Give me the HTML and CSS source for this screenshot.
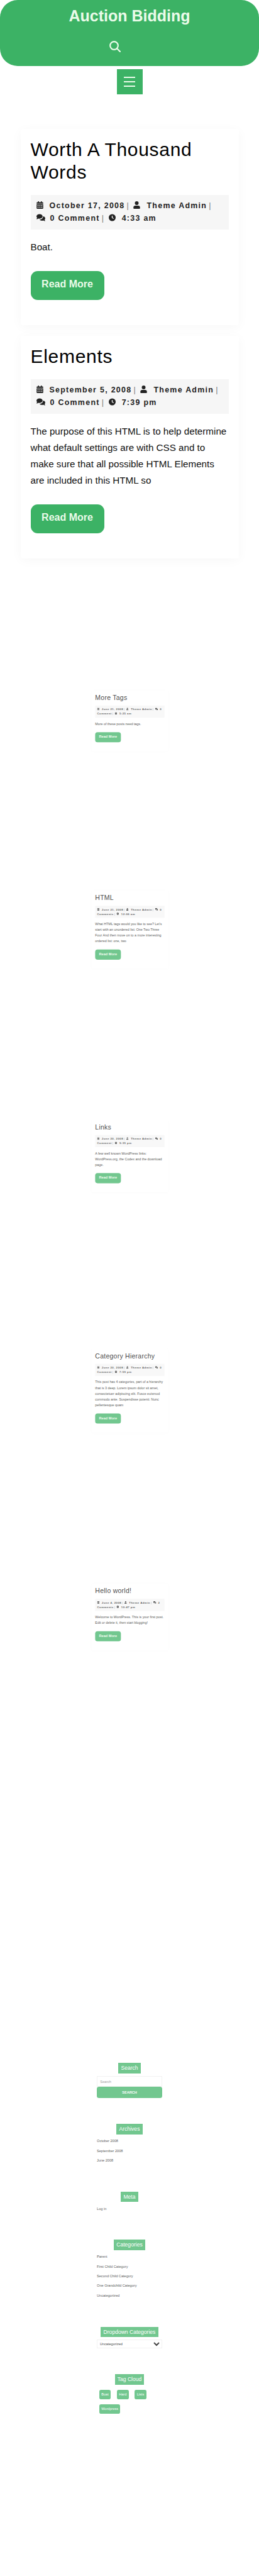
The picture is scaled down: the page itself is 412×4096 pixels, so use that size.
FILE: index.html
```html
<!DOCTYPE html>
<html lang="en">
<head>
    <meta charset="UTF-8">
    <meta name="viewport" content="width=device-width, initial-scale=1.0">
    <title>Auction Bidding</title>
    <link rel="stylesheet" href="styles.css">
</head>
<body>
    <svg class="icon-defs" aria-hidden="true">
        <symbol id="i-calendar" viewBox="0 0 14 16">
            <path d="M3 0h2v2h4V0h2v2h1.5A1.5 1.5 0 0 1 14 3.500V5H0V3.500A1.500 1.500 0 0 1 1.500 2H3zM0 6h14v8.500a1.500 1.500 0 0 1-1.500 1.500h-11A1.500 1.500 0 0 1 0 14.500zM2 8v2h2V8zm4 0v2h2V8zm4 0v2h2V8zm-8 3.500v2h2v-2zm4 0v2h2v-2zm4 0v2h2v-2z" fill-rule="evenodd"/>
        </symbol>
        <symbol id="i-user" viewBox="0 0 14 16">
            <circle cx="7" cy="4" r="4"/>
            <path d="M4 9.200h6a4 4 0 0 1 4 4v1.300a1.500 1.500 0 0 1-1.500 1.500h-11A1.500 1.500 0 0 1 0 14.500v-1.300a4 4 0 0 1 4-4z"/>
        </symbol>
        <symbol id="i-comments" viewBox="0 0 20 16">
            <path d="M7 0c3.900 0 7 2.300 7 5.200s-3.100 5.200-7 5.200c-.9 0-1.800-.1-2.600-.4C3.300 10.800 1.900 11.400.4 11.400c-.3 0-.5-.4-.3-.6.700-.7 1.200-1.600 1.400-2.400C.6 7.500 0 6.400 0 5.200 0 2.300 3.100 0 7 0z"/>
            <path d="M15 5.100c2.800.3 5 2.300 5 4.700 0 1.200-.6 2.300-1.500 3.200.2.800.7 1.700 1.400 2.400.2.200 0 .6-.3.600-1.500 0-2.900-.6-4-1.400-.8.300-1.700.4-2.600.4-2.500 0-4.700-1-5.900-2.500 4.300-.1 7.900-3 7.900-6.900z"/>
        </symbol>
        <symbol id="i-clock" viewBox="0 0 16 16">
            <path d="M8 0a8 8 0 1 1 0 16A8 8 0 0 1 8 0zM7 3.500v5.100l3.700 2.300 1-1.500L9 8V3.500z" fill-rule="evenodd"/>
        </symbol>
    </svg>

    <header class="site-header">
        <h1 class="site-title">Auction Bidding</h1>
        <div class="header-search">
            <svg class="search-icon" viewBox="0 0 18 18" fill="none" stroke="currentColor" stroke-width="2.200">
                <circle cx="7.500" cy="7.500" r="6.300"/>
                <path d="M12 12l5 5" stroke-linecap="round"/>
            </svg>
        </div>
    </header>

    <button class="menu-toggle" type="button" aria-label="Menu">
        <span></span><span></span><span></span>
    </button>

    <main class="posts">
        <article class="post">
            <h2>Worth A Thousand Words</h2>
            <div class="post-meta">
                <svg class="meta-icon"><use href="#i-calendar"/></svg>October 17, 2008<span class="sep">|</span>
                <svg class="meta-icon"><use href="#i-user"/></svg>Theme Admin<span class="sep">|</span>
                <svg class="meta-icon wide"><use href="#i-comments"/></svg>0 Comment<span class="sep">|</span>
                <svg class="meta-icon"><use href="#i-clock"/></svg>4:33 am
            </div>
            <p>Boat.</p>
            <a class="read-more" href="#">Read More</a>
        </article>

        <article class="post">
            <h2>Elements</h2>
            <div class="post-meta">
                <svg class="meta-icon"><use href="#i-calendar"/></svg>September 5, 2008<span class="sep">|</span>
                <svg class="meta-icon"><use href="#i-user"/></svg>Theme Admin<span class="sep">|</span>
                <svg class="meta-icon wide"><use href="#i-comments"/></svg>0 Comment<span class="sep">|</span>
                <svg class="meta-icon"><use href="#i-clock"/></svg>7:39 pm
            </div>
            <p>The purpose of this HTML is to help determine what default settings are with CSS and to make sure that all possible HTML Elements are included in this HTML so</p>
            <a class="read-more" href="#">Read More</a>
        </article>

        <article class="post post-small post-first">
            <h2>More Tags</h2>
            <div class="post-meta">
                <svg class="meta-icon"><use href="#i-calendar"/></svg>June 21, 2008<span class="sep">|</span>
                <svg class="meta-icon"><use href="#i-user"/></svg>Theme Admin<span class="sep">|</span>
                <svg class="meta-icon wide"><use href="#i-comments"/></svg>0 Comment<span class="sep">|</span>
                <svg class="meta-icon"><use href="#i-clock"/></svg>5:25 am
            </div>
            <p>More of these posts need tags.</p>
            <a class="read-more" href="#">Read More</a>
        </article>

        <article class="post post-small">
            <h2>HTML</h2>
            <div class="post-meta">
                <svg class="meta-icon"><use href="#i-calendar"/></svg>June 21, 2008<span class="sep">|</span>
                <svg class="meta-icon"><use href="#i-user"/></svg>Theme Admin<span class="sep">|</span>
                <svg class="meta-icon wide"><use href="#i-comments"/></svg>0 Comments<span class="sep">|</span>
                <svg class="meta-icon"><use href="#i-clock"/></svg>12:06 am
            </div>
            <p>What HTML tags would you like to see? Let's start with an unordered list: One Two Three Four And then move on to a more interesting ordered list: one, two</p>
            <a class="read-more" href="#">Read More</a>
        </article>

        <article class="post post-small">
            <h2>Links</h2>
            <div class="post-meta">
                <svg class="meta-icon"><use href="#i-calendar"/></svg>June 20, 2008<span class="sep">|</span>
                <svg class="meta-icon"><use href="#i-user"/></svg>Theme Admin<span class="sep">|</span>
                <svg class="meta-icon wide"><use href="#i-comments"/></svg>0 Comment<span class="sep">|</span>
                <svg class="meta-icon"><use href="#i-clock"/></svg>9:35 pm
            </div>
            <p>A few well known WordPress links: WordPress.org, the Codex and the download page.</p>
            <a class="read-more" href="#">Read More</a>
        </article>

        <article class="post post-small">
            <h2>Category Hierarchy</h2>
            <div class="post-meta">
                <svg class="meta-icon"><use href="#i-calendar"/></svg>June 20, 2008<span class="sep">|</span>
                <svg class="meta-icon"><use href="#i-user"/></svg>Theme Admin<span class="sep">|</span>
                <svg class="meta-icon wide"><use href="#i-comments"/></svg>0 Comment<span class="sep">|</span>
                <svg class="meta-icon"><use href="#i-clock"/></svg>7:59 pm
            </div>
            <p>This post has 4 categories, part of a hierarchy that is 3 deep. Lorem ipsum dolor sit amet, consectetuer adipiscing elit. Fusce euismod commodo ante. Suspendisse potenti. Nunc pellentesque quam</p>
            <a class="read-more" href="#">Read More</a>
        </article>

        <article class="post post-small">
            <h2>Hello world!</h2>
            <div class="post-meta">
                <svg class="meta-icon"><use href="#i-calendar"/></svg>June 4, 2008<span class="sep">|</span>
                <svg class="meta-icon"><use href="#i-user"/></svg>Theme Admin<span class="sep">|</span>
                <svg class="meta-icon wide"><use href="#i-comments"/></svg>2 Comments<span class="sep">|</span>
                <svg class="meta-icon"><use href="#i-clock"/></svg>10:47 pm
            </div>
            <p>Welcome to WordPress. This is your first post. Edit or delete it, then start blogging!</p>
            <a class="read-more" href="#">Read More</a>
        </article>
    </main>

    <aside class="sidebar">
        <section class="widget">
            <h3>Search</h3>
            <div class="search-form">
                <input type="text" placeholder="Search">
                <button type="button">SEARCH</button>
            </div>
        </section>

        <section class="widget">
            <h3>Archives</h3>
            <ul>
                <li>October 2008</li>
                <li>September 2008</li>
                <li>June 2008</li>
            </ul>
        </section>

        <section class="widget">
            <h3>Meta</h3>
            <ul>
                <li>Log in</li>
            </ul>
        </section>

        <section class="widget">
            <h3>Categories</h3>
            <ul>
                <li>Parent</li>
                <li>First Child Category</li>
                <li>Second Child Category</li>
                <li>One Grandchild Category</li>
                <li>Uncategorized</li>
            </ul>
        </section>

        <section class="widget">
            <h3>Dropdown Categories</h3>
            <select class="category-select">
                <option>Uncategorized</option>
            </select>
        </section>

        <section class="widget">
            <h3>Tag Cloud</h3>
            <div class="tag-cloud">
                <a href="#">Boat</a>
                <a href="#">Hard</a>
                <a href="#">Lists</a>
                <a href="#">Wordpress</a>
            </div>
        </section>
    </aside>
</body>
</html>
```

FILE: styles.css
```css
body {
    font-family: "Liberation Sans", Arial, sans-serif;
    background-color: #fff;
    color: #111;
    margin: 0;
}

.icon-defs {
    display: none;
}

.site-header {
    background-color: #3cb265;
    color: #eafbe9;
    border-radius: 28px;
    height: 105px;
    padding-top: 8px;
    box-sizing: border-box;
}

.site-title {
    font-size: 25px;
    line-height: 34px;
    margin: 0;
    text-align: center;
}

.header-search {
    display: flex;
    justify-content: center;
    padding: 23px 46px 0 0;
}

.search-icon {
    width: 18px;
    height: 18px;
}

.menu-toggle {
    display: flex;
    flex-direction: column;
    justify-content: center;
    align-items: center;
    gap: 5px;
    width: 41px;
    height: 40px;
    margin: 5px auto 0;
    padding: 0;
    background-color: #3cb265;
    border: none;
}

.menu-toggle span {
    display: block;
    width: 18px;
    height: 2px;
    background-color: #eafbe9;
}

.posts {
    display: flex;
    flex-direction: column;
    align-items: center;
    gap: 17px;
    padding: 55px 0 558px;
}

.post {
    box-sizing: border-box;
    width: 347px;
    padding: 15px 16px 40px;
    background: #fff;
    border-radius: 4px;
    box-shadow: 0 3px 18px rgba(0, 0, 0, 0.035);
}

.post h2 {
    font-size: 30px;
    line-height: 36px;
    font-weight: normal;
    letter-spacing: 0.7px;
    color: #000;
    margin: 0;
}

.post-meta {
    height: 55px;
    box-sizing: border-box;
    margin-top: 18px;
    padding: 8px 0 0 9px;
    background-color: #f6f6f6;
    font-size: 12.4px;
    font-weight: bold;
    line-height: 19.5px;
    letter-spacing: 1.3px;
    color: #222;
}

.meta-icon {
    width: 11px;
    height: 12px;
    margin-right: 10px;
    vertical-align: -1px;
    fill: #222;
}

.meta-icon.wide {
    width: 14px;
    margin-right: 8px;
}

.sep {
    font-weight: normal;
    color: #777;
    letter-spacing: 0;
    margin: 0 3px;
}

.post p {
    margin: 15px 0 0;
    font-size: 15.2px;
    line-height: 26px;
    color: #111;
}

.read-more {
    display: block;
    width: 117px;
    height: 46px;
    box-sizing: border-box;
    margin-top: 25px;
    padding-top: 12px;
    background-color: #3cb265;
    border-radius: 11px;
    color: #eafbe9;
    font-size: 16px;
    font-weight: bold;
    text-align: center;
    text-decoration: none;
}

/* posts still caught mid zoom-in */
.post-small {
    transform: scale(0.35);
    opacity: 0.72;
    box-shadow: 0 2px 12px rgba(0, 0, 0, 0.015);
}

.post-first {
    margin-top: 103px;
}

.post-small ~ .post-small ~ .post-small {
    margin-top: 2px;
}

.sidebar {
    zoom: 0.35;
    width: 297px;
    margin: 0 auto;
    opacity: 0.72;
    display: flex;
    flex-direction: column;
    gap: 118px;
}

.widget h3 {
    width: fit-content;
    height: 48px;
    margin: 0 auto;
    padding: 0 12px;
    background-color: #3cb265;
    color: #fff;
    font-size: 24.5px;
    font-weight: normal;
    line-height: 48px;
}

.widget ul {
    list-style: none;
    margin: 9px 0 0;
    padding: 0;
}

.widget li {
    height: 44px;
    font-size: 16px;
    line-height: 44px;
}

.search-form {
    margin-top: 12px;
}

.search-form input {
    display: block;
    box-sizing: border-box;
    width: 100%;
    height: 50px;
    padding: 0 12px;
    border: 1px solid #eee;
    font-size: 16px;
    font-family: inherit;
}

.search-form button {
    display: block;
    width: 100%;
    height: 50px;
    background-color: #3cb265;
    border: none;
    border-radius: 10px;
    color: #fff;
    font-family: inherit;
    font-size: 16px;
    font-weight: bold;
}

.category-select {
    display: block;
    width: 100%;
    height: 38px;
    margin-top: 12px;
    padding: 0 8px;
    background: #fff;
    border: 1px solid #eee;
    font-family: inherit;
    font-size: 16px;
}

.tag-cloud {
    display: flex;
    flex-wrap: wrap;
    gap: 23px 28px;
    margin-top: 23px;
    padding-left: 11px;
}

.tag-cloud a {
    height: 43px;
    padding: 0 9.5px;
    background-color: #3cb265;
    border-radius: 8px;
    color: #fff;
    font-size: 16px;
    line-height: 40px;
    text-decoration: none;
}
```
